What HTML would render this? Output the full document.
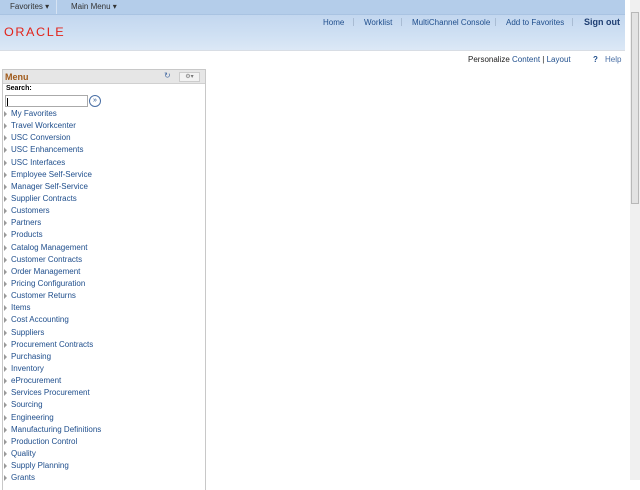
<!DOCTYPE html>
<html><head><style>
body{margin:0;width:640px;height:480px;overflow:hidden;background:#fff;font-family:"Liberation Sans",Arial,sans-serif;position:relative}
.a{position:absolute}
#hdr{left:0;top:0;width:625px;height:50px;background:linear-gradient(#c7daf0,#c3d7ef 30%,#cfe0f3 70%,#dce8f6)}
#top{left:0;top:0;width:625px;height:14px;background:#b4cdea;border-bottom:1px solid #a9c3e2}
.t{font-size:8px;color:#1f4e8c;white-space:nowrap}
.sep{width:1px;height:8px;background:#a9bcd3;top:18px}
#menu{left:2px;top:69px;width:202px;height:420px;border:1px solid #c8c8c8;border-bottom:none}
.it{position:absolute;left:11px;font-size:8px;color:#1f4e8c;white-space:nowrap}
.tri{position:absolute;left:4px;width:0;height:0;border-left:3px solid #999;border-top:3px solid transparent;border-bottom:3px solid transparent}
</style></head><body>
<div id="hdr" class="a"></div>
<div id="top" class="a"></div>
<div class="a" style="left:56px;top:0;width:1px;height:14px;background:#d6e3f3"></div>
<div class="a t" style="left:10px;top:2px;color:#333">Favorites ▾</div>
<div class="a t" style="left:71px;top:2px;color:#333">Main Menu ▾</div>
<div class="a" style="left:4px;top:25px;font-size:12px;color:#e2231a;letter-spacing:1.5px;transform:scaleX(1.05);transform-origin:left">ORACLE</div>
<div class="a t" style="left:323px;top:18px">Home</div>
<div class="a sep" style="left:353px"></div>
<div class="a t" style="left:364px;top:18px">Worklist</div>
<div class="a sep" style="left:401px"></div>
<div class="a t" style="left:412px;top:18px">MultiChannel Console</div>
<div class="a sep" style="left:495px"></div>
<div class="a t" style="left:506px;top:18px">Add to Favorites</div>
<div class="a sep" style="left:572px"></div>
<div class="a t" style="left:584px;top:17px;font-size:9px;font-weight:bold;color:#1f3f73">Sign out</div>
<div class="a" style="left:0;top:50px;width:625px;height:1px;background:#d8dde4"></div>
<div class="a t" style="left:468px;top:55px;color:#222">Personalize <span style="color:#1f4e8c">Content</span> | <span style="color:#1f4e8c">Layout</span></div>
<div class="a t" style="left:593px;top:55px;font-weight:bold">?</div>
<div class="a t" style="left:605px;top:55px;color:#4a6fa5">Help</div>
<div class="a" style="left:630px;top:0;width:10px;height:480px;background:#f0f0f0"></div>
<div class="a" style="left:631px;top:12px;width:8px;height:192px;background:#e3e3e3;border:1px solid #b8b8b8;box-sizing:border-box"></div>
<div id="menu" class="a">
<div style="height:13px;background:#e6e6e6;border-bottom:1px solid #d0d0d0;position:relative">
<span style="position:absolute;left:2px;top:2px;font-size:9px;font-weight:bold;color:#a05a1a">Menu</span>
<span style="position:absolute;left:161px;top:1px;font-size:8px;color:#4a6fa5">↻</span>
<span style="position:absolute;left:176px;top:2px;width:19px;height:8px;background:#f2f2f2;border:1px solid #ccc;font-size:6px;color:#777;text-align:center;line-height:8px">⚙▾</span>
</div>
<div style="position:absolute;left:3px;top:15px;font-size:7px;font-weight:bold">Search:</div>
<div style="position:absolute;left:2px;top:25px;width:83px;height:12px;border:1px solid #aaa;box-sizing:border-box"><div style="margin:2px 0 0 1px;width:1px;height:8px;background:#000"></div></div>
<div style="position:absolute;left:86px;top:25px;width:10px;height:10px;border:1px solid #4a6fa5;border-radius:50%;font-size:7px;line-height:10px;text-align:center;color:#1f4e8c">»</div>
</div>
<div id="items"></div>
<script>
var n=["My Favorites","Travel Workcenter","USC Conversion","USC Enhancements","USC Interfaces","Employee Self-Service","Manager Self-Service","Supplier Contracts","Customers","Partners","Products","Catalog Management","Customer Contracts","Order Management","Pricing Configuration","Customer Returns","Items","Cost Accounting","Suppliers","Procurement Contracts","Purchasing","Inventory","eProcurement","Services Procurement","Sourcing","Engineering","Manufacturing Definitions","Production Control","Quality","Supply Planning","Grants"],h="";
for(var i=0;i<n.length;i++){var y=109+i*12.14;h+='<div class="tri" style="top:'+(y+2)+'px"></div><div class="it" style="top:'+y+'px">'+n[i]+'</div>';}
document.getElementById("items").innerHTML=h;
</script>
</body></html>
